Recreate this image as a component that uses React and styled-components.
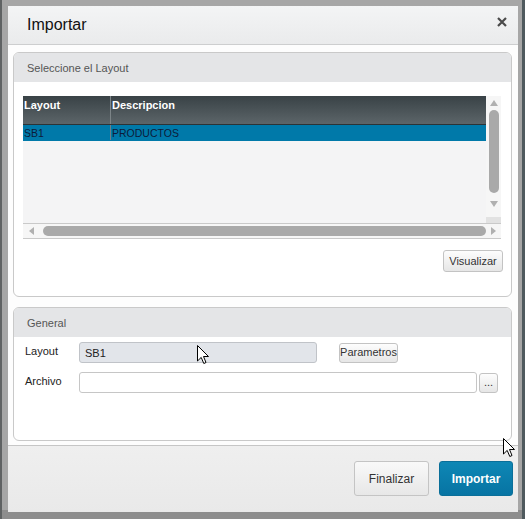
import React from "react";
import styled, { createGlobalStyle } from "styled-components";

const GlobalStyle = createGlobalStyle`
  html, body { margin: 0; padding: 0; }
  body {
    width: 525px;
    height: 519px;
    overflow: hidden;
    font-family: "Liberation Sans", Arial, sans-serif;
    background: #a3a3a3;
  }
  * { box-sizing: border-box; }
`;

const Backdrop = styled.div`
  position: relative;
  width: 525px;
  height: 519px;
  padding: 6px 7px 7px 8px;
  background:
    linear-gradient(to right, #5f6263 0 2px, transparent 2px calc(100% - 3px), #4f5a5e calc(100% - 3px)),
    linear-gradient(to bottom, #a6a6a6 0 510px, #8d8d8d 510px);
`;

const Dialog = styled.div`
  width: 510px;
  height: 506px;
  background: #fdfdfd;
  display: flex;
  flex-direction: column;
`;

const Header = styled.div`
  height: 39px;
  flex: none;
  display: flex;
  align-items: center;
  justify-content: space-between;
  padding: 0 11px 0 19px;
  background: linear-gradient(#f3f4f5, #eaebec);
  border-bottom: 1px solid #cdcecf;
`;

const Title = styled.h1`
  margin: 0 0 1px 0;
  font-size: 16px;
  font-weight: normal;
  color: #111;
`;

const Close = styled.svg`
  width: 10px;
  height: 10px;
  margin-top: -6px;
`;

const Body = styled.div`
  height: 400px;
  flex: none;
  display: flex;
  flex-direction: column;
  gap: 10px;
  padding: 7px 6px 4px 5px;
  background: #fdfdfd;
`;

const Panel = styled.section`
  height: ${(p) => p.$h}px;
  flex: none;
  border: 1px solid #c9c9c9;
  border-radius: 6px;
  background: #fff;
  display: flex;
  flex-direction: column;
  overflow: hidden;
`;

const PanelHeader = styled.div`
  height: 29px;
  flex: none;
  display: flex;
  align-items: center;
  padding-left: 13px;
  background: #e4e5e7;
  font-size: 11px;
  color: #555;
`;

const PanelBody = styled.div`
  flex: 1;
  display: flex;
  flex-direction: column;
  padding: ${(p) => p.$pad};
`;

const Grid = styled.div`
  width: 478px;
  display: grid;
  grid-template-columns: 1fr 15px;
  grid-template-rows: 127px 16px;
`;

const TableArea = styled.div`
  background: #f4f4f5;
  display: flex;
  flex-direction: column;
`;

const Row = styled.div`
  display: grid;
  grid-template-columns: 88px 1fr;
  height: ${(p) => p.$h}px;
  background: ${(p) => p.$bg};
  border-bottom: 1px solid ${(p) => p.$line};
`;

const HeadCell = styled.div`
  padding: 3px 0 0 1px;
  font-size: 11px;
  font-weight: bold;
  color: #fff;
  border-right: ${(p) => (p.$div ? "1px solid #7c8487" : "none")};
`;

const Cell = styled.div`
  padding: 2px 0 0 1px;
  font-size: 10.5px;
  color: #0c1b3a;
  border-right: ${(p) => (p.$div ? "1px solid #6f7f88" : "none")};
  line-height: 12px;
`;

const VScroll = styled.div`
  background: #f6f6f6;
  position: relative;
  display: flex;
  flex-direction: column;
  align-items: center;
  padding-top: 4px;
`;

const Thumb = styled.div`
  background: #a9a9a9;
  border-radius: 5px;
  ${(p) => (p.$vertical ? "width: 10px; height: 83px; margin-top: 4px;" : "height: 10px; flex: 1;")}
`;

const Arrow = styled.div`
  width: 0;
  height: 0;
  flex: none;
  ${(p) =>
    p.$dir === "up"
      ? "border-left: 4px solid transparent; border-right: 4px solid transparent; border-bottom: 6px solid #b0b0b0;"
      : p.$dir === "down"
      ? "border-left: 4px solid transparent; border-right: 4px solid transparent; border-top: 6px solid #b0b0b0; margin-top: 8px;"
      : p.$dir === "left"
      ? "border-top: 4px solid transparent; border-bottom: 4px solid transparent; border-right: 5px solid #b0b0b0;"
      : "border-top: 4px solid transparent; border-bottom: 4px solid transparent; border-left: 5px solid #b0b0b0;"}
`;

const Corner = styled.div`
  position: absolute;
  left: 0;
  right: 0;
  bottom: 0;
  height: 6px;
  background: #e2e2e2;
`;

const HScroll = styled.div`
  border-top: 1px solid #c9c9c9;
  border-bottom: 1px solid #c9c9c9;
  background: #f6f6f6;
  display: flex;
  align-items: center;
  padding-left: 6px;
  gap: 9px;
`;

const HScrollEnd = styled.div`
  border-top: 1px solid #c9c9c9;
  border-bottom: 1px solid #c9c9c9;
  background: #f6f6f6;
  display: flex;
  align-items: center;
  justify-content: center;
`;

const Actions = styled.div`
  display: flex;
  justify-content: flex-end;
  margin-top: 11px;
`;

const SmallButton = styled.button`
  width: ${(p) => p.$w}px;
  height: ${(p) => p.$h || 21}px;
  padding: 0;
  flex: none;
  font-family: inherit;
  font-size: 11px;
  color: #333;
  border: 1px solid #c3c3c3;
  border-radius: 3px;
  background: linear-gradient(#fdfdfd, #e6e6e6);
  line-height: 1;
`;

const FormRow = styled.div`
  display: flex;
  align-items: center;
  height: 21px;
  margin-bottom: 9px;
`;

const Label = styled.label`
  width: 54px;
  flex: none;
  font-size: 11px;
  color: #222;
  margin-top: -4px;
`;

const Input = styled.div`
  width: ${(p) => p.$w}px;
  height: 21px;
  flex: none;
  border: 1px solid ${(p) => (p.$disabled ? "#c0c3c8" : "#c6c6c6")};
  border-radius: 3px;
  background: ${(p) => (p.$disabled ? "#e2e5ea" : "#fff")};
  font-size: 11px;
  color: #222;
  display: flex;
  align-items: center;
  padding-left: 5px;
  margin-right: ${(p) => p.$gap}px;
`;

const Footer = styled.div`
  flex: 1;
  border-top: 1px solid #c6c6c6;
  background: linear-gradient(#efefef, #e9e9e9);
  display: flex;
  justify-content: flex-end;
  align-items: flex-start;
  gap: 10px;
  padding: 15px 5px 0 0;
`;

const FooterButton = styled.button`
  width: ${(p) => p.$w}px;
  height: 35px;
  padding: 0;
  font-family: inherit;
  font-size: 12px;
  border-radius: 3px;
  ${(p) =>
    p.$primary
      ? "background: linear-gradient(#0e87b5, #0774a3); border: 1px solid #0a6f99; color: #fff; font-weight: bold;"
      : "background: linear-gradient(#f9f9f9, #e7e7e7); border: 1px solid #c4c4c4; color: #333;"}
`;

const Cursor = styled.svg`
  position: absolute;
  left: ${(p) => p.$x}px;
  top: ${(p) => p.$y}px;
  width: 13px;
  height: 20px;
`;

const Pointer = ({ x, y }) => (
  <Cursor $x={x} $y={y} viewBox="0 0 13 20">
    <path
      d="M0.5 0.5 L0.5 16 L4.2 12.4 L6.8 18.5 L9 17.5 L6.5 11.5 L11.5 11.5 Z"
      fill="#fff"
      stroke="#000"
      strokeWidth="1"
      strokeLinejoin="miter"
    />
  </Cursor>
);

export default function App() {
  return (
    <>
      <GlobalStyle />
      <Backdrop>
        <Dialog>
          <Header>
            <Title>Importar</Title>
            <Close viewBox="0 0 10 10">
              <path d="M1 1 L9 9 M9 1 L1 9" stroke="#4a4a4a" strokeWidth="2.2" />
            </Close>
          </Header>
          <Body>
            <Panel $h={245}>
              <PanelHeader>Seleccione el Layout</PanelHeader>
              <PanelBody $pad="14px 8px 0 9px">
                <Grid>
                  <TableArea>
                    <Row $h={29} $bg="linear-gradient(#394246, #5c6569)" $line="#2c3336">
                      <HeadCell $div>Layout</HeadCell>
                      <HeadCell>Descripcion</HeadCell>
                    </Row>
                    <Row $h={16} $bg="#0079a9" $line="#0079a9">
                      <Cell $div>SB1</Cell>
                      <Cell>PRODUCTOS</Cell>
                    </Row>
                  </TableArea>
                  <VScroll>
                    <Arrow $dir="up" />
                    <Thumb $vertical />
                    <Arrow $dir="down" />
                    <Corner />
                  </VScroll>
                  <HScroll>
                    <Arrow $dir="left" />
                    <Thumb />
                  </HScroll>
                  <HScrollEnd>
                    <Arrow $dir="right" />
                  </HScrollEnd>
                </Grid>
                <Actions>
                  <SmallButton $w={60} $h={22}>Visualizar</SmallButton>
                </Actions>
              </PanelBody>
            </Panel>
            <Panel $h={134}>
              <PanelHeader>General</PanelHeader>
              <PanelBody $pad="5px 0 0 11px">
                <FormRow>
                  <Label>Layout</Label>
                  <Input $w={238} $gap={22} $disabled>SB1</Input>
                  <SmallButton $w={59} $h={20}>Parametros</SmallButton>
                </FormRow>
                <FormRow>
                  <Label>Archivo</Label>
                  <Input $w={398} $gap={2} />
                  <SmallButton $w={19} $h={20}>...</SmallButton>
                </FormRow>
              </PanelBody>
            </Panel>
          </Body>
          <Footer>
            <FooterButton $w={75}>Finalizar</FooterButton>
            <FooterButton $w={74} $primary>Importar</FooterButton>
          </Footer>
        </Dialog>
        <Pointer x={197} y={345} />
        <Pointer x={503} y={438} />
      </Backdrop>
    </>
  );
}
